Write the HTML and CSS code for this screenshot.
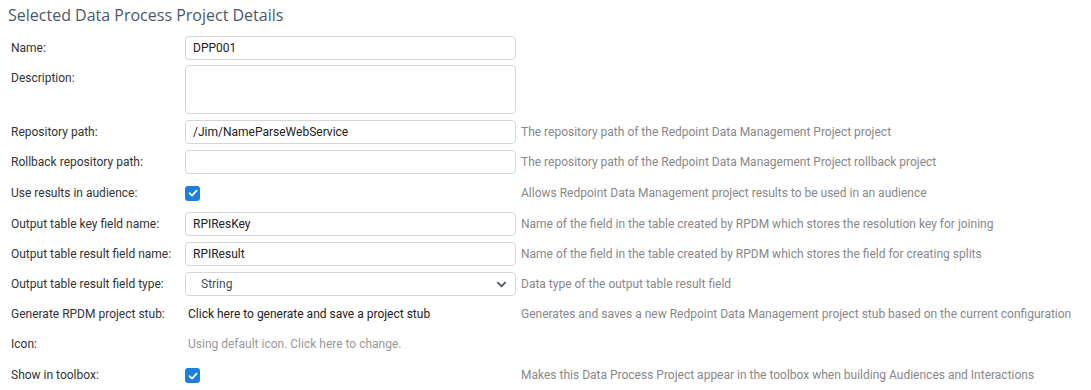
FILE: index.html
```html
<!DOCTYPE html>
<html>
<head>
<meta charset="UTF-8">
<meta name="viewport" content="width=device-width, initial-scale=1.0">
<title>Data Process Project</title>
<link rel="stylesheet" href="styles.css">
</head>
<body>
    <h2 class="title">Selected Data Process Project Details</h2>

    <div class="details">
        <label class="lbl">Name:</label>
        <input class="field" type="text" value="DPP001">
        <span class="help"></span>

        <label class="lbl">Description:</label>
        <textarea class="field area"></textarea>
        <span class="help"></span>

        <label class="lbl">Repository path:</label>
        <input class="field" type="text" value="/Jim/NameParseWebService">
        <span class="help">The repository path of the Redpoint Data Management Project project</span>

        <label class="lbl">Rollback repository path:</label>
        <input class="field" type="text" value="">
        <span class="help">The repository path of the Redpoint Data Management Project rollback project</span>

        <label class="lbl row-check">Use results in audience:</label>
        <span class="value row-check"><span class="check"><svg viewBox="0 0 14 14" width="14" height="14"><path d="M3.5 7.2 L6 9.6 L10.6 4.6" fill="none" stroke="#fff" stroke-width="1.8" stroke-linecap="round" stroke-linejoin="round"/></svg></span></span>
        <span class="help row-check">Allows Redpoint Data Management project results to be used in an audience</span>

        <label class="lbl">Output table key field name:</label>
        <input class="field" type="text" value="RPIResKey">
        <span class="help">Name of the field in the table created by RPDM which stores the resolution key for joining</span>

        <label class="lbl">Output table result field name:</label>
        <input class="field" type="text" value="RPIResult">
        <span class="help">Name of the field in the table created by RPDM which stores the field for creating splits</span>

        <label class="lbl">Output table result field type:</label>
        <div class="field select">
            <span>String</span>
            <svg viewBox="0 0 12 8" width="11" height="7"><path d="M1.2 1.4 L6 6 L10.8 1.4" fill="none" stroke="#4a5866" stroke-width="2"/></svg>
        </div>
        <span class="help">Data type of the output table result field</span>

        <label class="lbl">Generate RPDM project stub:</label>
        <span class="value link">Click here to generate and save a project stub</span>
        <span class="help">Generates and saves a new Redpoint Data Management project stub based on the current configuration</span>

        <label class="lbl">Icon:</label>
        <span class="value muted">Using default icon. Click here to change.</span>
        <span class="help"></span>

        <label class="lbl row-last">Show in toolbox:</label>
        <span class="value row-last"><span class="check"><svg viewBox="0 0 14 14" width="14" height="14"><path d="M3.5 7.2 L6 9.6 L10.6 4.6" fill="none" stroke="#fff" stroke-width="1.8" stroke-linecap="round" stroke-linejoin="round"/></svg></span></span>
        <span class="help row-last">Makes this Data Process Project appear in the toolbox when building Audiences and Interactions</span>
    </div>
</body>
</html>
```

FILE: styles.css
```css
body {
    font-family: Roboto, "Liberation Sans", sans-serif;
    font-size: 12px;
    color: #333;
    margin: 0;
    padding: 0 8px;
    background-color: #ffffff;
}
.title {
    font-family: "Open Sans", Lato, sans-serif;
    font-weight: normal;
    font-size: 16px;
    color: #4b5967;
    margin: 5px 0 0 0;
    line-height: 20px;
}
.details {
    display: grid;
    grid-template-columns: 169px 331px 1fr;
    column-gap: 5px;
    row-gap: 6px;
    margin-top: 11px;
    padding-left: 3px;
}
.lbl {
    line-height: 24px;
    height: 24px;
    white-space: nowrap;
}
.field {
    box-sizing: border-box;
    height: 24px;
    border: 1px solid #d6d6d6;
    border-radius: 4px;
    padding: 0 7px;
    font-family: Roboto, "Liberation Sans", sans-serif;
    font-size: 12px;
    color: #222;
    background: #fff;
    margin: 0;
    outline: none;
}
.area {
    height: 49px;
    margin-top: -1px;
    resize: none;
}
.help {
    line-height: 24px;
    color: #888;
    white-space: nowrap;
}
.value {
    line-height: 24px;
    display: flex;
    align-items: center;
}
.row-check {
    height: 26px;
    line-height: 26px;
}
.row-last {
    height: 27px;
    line-height: 27px;
}
.link {
    color: #222;
    padding-left: 3px;
}
.muted {
    color: #999;
    padding-left: 3px;
}
.check {
    display: inline-flex;
    align-items: center;
    justify-content: center;
    width: 15px;
    height: 15px;
    border-radius: 3px;
    background-color: #1a7fde;
}
.select {
    display: flex;
    align-items: center;
    justify-content: space-between;
    padding: 0 8px 0 15px;
    color: #3f4d5b;
}
```
